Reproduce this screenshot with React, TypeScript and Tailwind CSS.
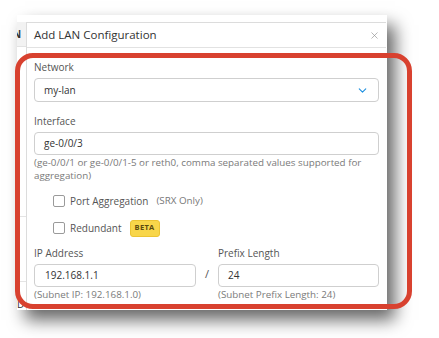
import React from 'react';
import { ChevronDown, X } from 'lucide-react';

const Checkbox: React.FC<{ label: string; children?: React.ReactNode }> = ({ label, children }) => (
  <div className="flex items-center h-[16px] ml-[19px]">
    <span className="w-[12px] h-[12px] border border-[#9a9a9a] rounded-[2px] bg-white shrink-0" />
    <span className="ml-[5px] text-[10px] text-[#555]">{label}</span>
    {children}
  </div>
);

const App: React.FC = () => {
  return (
    <div className="w-[439px] h-[338px] bg-white relative overflow-hidden font-['Open_Sans',sans-serif]">
      {/* screenshot with drop shadow */}
      <div className="ml-[17px] mt-[15px] w-[370px] h-[295px] bg-white pt-[7px] flex shadow-[8px_10px_16px_rgba(0,0,0,0.6)] overflow-hidden">
        {/* background table peeking out */}
        <div className="w-[9px] flex flex-col">
          <div className="h-[25px] bg-[#f2f2f2] border-b border-[#e2e2e2] overflow-hidden flex items-center">
            <span className="text-[10px] font-bold text-[#333] -ml-[4px]">N</span>
          </div>
          <div className="h-[170px] border-b border-[#e4e4e4]" />
          <div className="h-[65px] border-b border-[#e4e4e4]" />
          <div className="pt-[14px] leading-[12px]">
            <span className="text-[10px] text-[#333]">D</span>
          </div>
        </div>

        {/* dialog */}
        <div className="w-[360px] border-l border-t border-[#dcdcdc] bg-white flex flex-col">
          <div className="h-[25px] border-b border-[#e2e2e2] flex items-center justify-between pl-[7px] pr-[6px]">
            <span className="text-[11.5px] text-[#333]">Add LAN Configuration</span>
            <X size={11} strokeWidth={1.4} color="#8f8f8f" />
          </div>

          <div className="pl-[7px] pr-[7px] pt-[12px] flex flex-col">
            <label className="text-[10px] text-[#555] leading-[15px]">Network</label>
            <div className="mt-[3px] h-[24px] border border-[#cfcfcf] rounded-[4px] flex items-center justify-between pl-[9px] pr-[9px]">
              <span className="text-[10px] text-[#333]">my-lan</span>
              <ChevronDown size={13} strokeWidth={2} color="#1e90e0" />
            </div>

            <label className="mt-[12px] text-[10px] text-[#555] leading-[15px]">Interface</label>
            <div className="mt-[3px] h-[23px] border border-[#cfcfcf] rounded-[4px] flex items-center pl-[9px]">
              <span className="text-[10px] text-[#333]">ge-0/0/3</span>
            </div>
            <p className="mt-[2px] text-[9.8px] leading-[12.5px] text-[#7a7a7a]">
              (ge-0/0/1 or ge-0/0/1-5 or reth0, comma separated values supported for aggregation)
            </p>

            <div className="mt-[11px] flex flex-col gap-[11px]">
              <Checkbox label="Port Aggregation">
                <span className="ml-[8px] text-[9.8px] text-[#777]">(SRX Only)</span>
              </Checkbox>
              <Checkbox label="Redundant">
                <span className="ml-[8px] h-[17px] px-[4px] flex items-center bg-[#f8d64a] border border-[#ecc433] rounded-[3px] text-[7.5px] font-bold text-[#5c4a10] tracking-[0.3px]">
                  BETA
                </span>
              </Checkbox>
            </div>

            <div className="mt-[10px] flex">
              <div className="w-[162px] flex flex-col">
                <label className="text-[10px] text-[#555] leading-[15px]">IP Address</label>
                <div className="mt-[3px] h-[23px] border border-[#cfcfcf] rounded-[4px] flex items-center pl-[10px]">
                  <span className="text-[10px] text-[#333]">192.168.1.1</span>
                </div>
                <span className="mt-[1px] text-[9.8px] text-[#7a7a7a] leading-[13px]">(Subnet IP: 192.168.1.0)</span>
              </div>
              <div className="w-[22px] flex justify-center pt-[20px]">
                <span className="text-[11px] text-[#555]">/</span>
              </div>
              <div className="w-[161px] flex flex-col">
                <label className="text-[10px] text-[#555] leading-[15px]">Prefix Length</label>
                <div className="mt-[3px] h-[23px] border border-[#cfcfcf] rounded-[4px] flex items-center pl-[9px]">
                  <span className="text-[10px] text-[#333]">24</span>
                </div>
                <span className="mt-[1px] text-[9.8px] text-[#7a7a7a] leading-[13px]">(Subnet Prefix Length: 24)</span>
              </div>
            </div>
          </div>
        </div>
      </div>

      {/* red annotation frame */}
      <div className="absolute left-[15px] top-[53px] w-[397px] h-[256px] border-[5px] border-[#d8412f] rounded-[18px]" />
    </div>
  );
};

export default App;
